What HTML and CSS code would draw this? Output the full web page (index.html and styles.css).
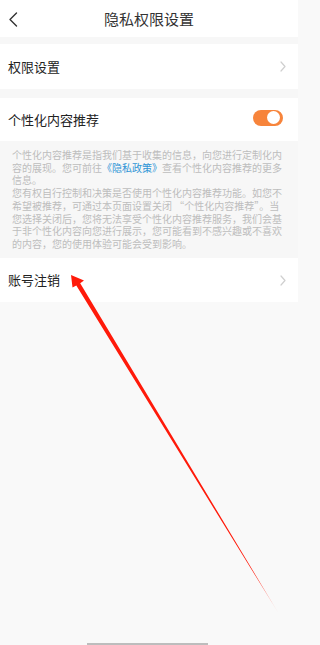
FILE: index.html
```html
<!DOCTYPE html>
<html lang="zh-CN">
<head>
<meta charset="utf-8">
<title>隐私权限设置</title>
<link rel="stylesheet" href="styles.css">
</head>
<body>
<div class="page">
  <header class="topbar">
    <div class="back">
      <svg width="10" height="15" viewBox="0 0 10 15"><path d="M8.5 1 L2 7.5 L8.5 14" fill="none" stroke="#333" stroke-width="1.4" stroke-linecap="round" stroke-linejoin="round"/></svg>
    </div>
    <div class="title">隐私权限设置</div>
    <div></div>
  </header>
  <div class="spacer s7"></div>
  <div class="row r45">
    <span class="label">权限设置</span>
    <svg class="chev" width="6" height="11" viewBox="0 0 6 11"><path d="M1 1 L5 5.5 L1 10" fill="none" stroke="#cfcfcf" stroke-width="1.2" stroke-linecap="round" stroke-linejoin="round"/></svg>
  </div>
  <div class="spacer s9"></div>
  <div class="row r43">
    <span class="label">个性化内容推荐</span>
    <span class="toggle"><span class="knob"></span></span>
  </div>
  <div class="desc">
    <p class="para">个性化内容推荐是指我们基于收集的信息，向您进行定制化内容的展现。您可前往<a class="link">《隐私政策》</a>查看个性化内容推荐的更多信息。</p>
    <p class="para">您有权自行控制和决策是否使用个性化内容推荐功能。如您不希望被推荐，可通过本页面设置关闭 “个性化内容推荐”。当您选择关闭后，您将无法享受个性化内容推荐服务，我们会基于非个性化内容向您进行展示，您可能看到不感兴趣或不喜欢的内容，您的使用体验可能会受到影响。</p>
  </div>
  <div class="row r44">
    <span class="label">账号注销</span>
    <svg class="chev" width="6" height="11" viewBox="0 0 6 11"><path d="M1 1 L5 5.5 L1 10" fill="none" stroke="#cfcfcf" stroke-width="1.2" stroke-linecap="round" stroke-linejoin="round"/></svg>
  </div>
  <div class="home-bar"></div>
  <svg class="arrow" width="298" height="645" viewBox="0 0 298 645">
    <defs>
      <linearGradient id="fade" x1="71" y1="275" x2="279" y2="614" gradientUnits="userSpaceOnUse">
        <stop offset="0" stop-color="#ff1a0a"/>
        <stop offset="0.9" stop-color="#ff1a0a"/>
        <stop offset="1" stop-color="#ff1a0a" stop-opacity="0.15"/>
      </linearGradient>
    </defs>
    <polygon points="71,275 84,280.5 80.2,283.2 279,614 76.3,285.6 72.5,287.5" fill="url(#fade)"/>
  </svg>
</div>
</body>
</html>
```
FILE: styles.css
```css
* { box-sizing: border-box; }
html, body { margin: 0; padding: 0; }
body {
  background: #f9f9f9;
  font-family: "Noto Sans CJK SC", "Noto Sans", sans-serif;
  color: #222;
}
.page {
  position: relative;
  width: 298px;
  height: 645px;
  overflow: hidden;
  background: #f9f9f9;
}
.topbar {
  height: 37px;
  background: #fff;
  display: grid;
  grid-template-columns: 1fr auto 1fr;
  align-items: center;
}
.back {
  padding-left: 8px;
  display: flex;
  align-items: center;
  padding-top: 1px;
}
.title {
  font-size: 15px;
  color: #333;
  line-height: 20px;
}
.spacer { background: #f7f7f7; }
.s7 { height: 7px; }
.s9 { height: 9px; }
.row {
  background: #fff;
  display: flex;
  align-items: center;
  justify-content: space-between;
  padding: 0 12px 0 8px;
}
.r45 { height: 45px; }
.r43 { height: 43px; padding-right: 15px; }
.r44 { height: 44px; }
.label {
  font-size: 13px;
  color: #222;
  line-height: 18px;
}
.chev { display: block; }
.toggle {
  position: relative;
  width: 30px;
  height: 16px;
  border-radius: 8px;
  background: #f7843b;
  margin-top: -4px;
}
.knob {
  position: absolute;
  right: 3px;
  top: 1.5px;
  width: 13px;
  height: 13px;
  border-radius: 50%;
  background: #fff;
}
.desc {
  background: #f7f7f7;
  height: 117px;
  padding: 8px 0 0 12px;
  font-size: 10px;
  line-height: 12.7px;
  color: #bdbdbd;
}
.para {
  margin: 0;
  width: 272px;
}
.link { color: #2f95d6; text-decoration: none; }
.home-bar {
  position: absolute;
  left: 87px;
  bottom: 0;
  width: 121px;
  height: 2px;
  background: #bdbdbd;
}
.arrow {
  position: absolute;
  left: 0;
  top: 0;
  pointer-events: none;
}
```
